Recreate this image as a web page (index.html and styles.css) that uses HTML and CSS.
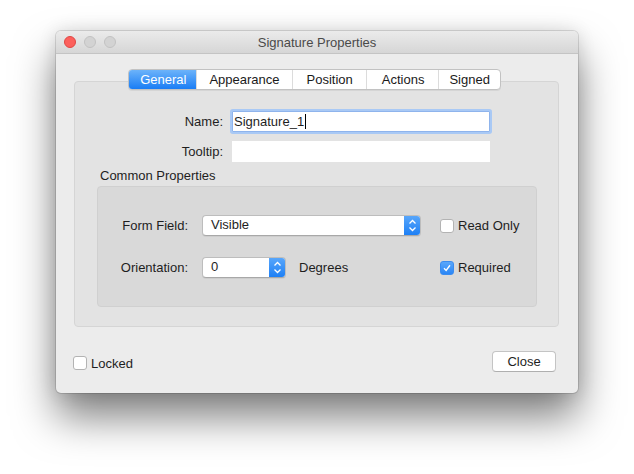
FILE: index.html
```html
<!DOCTYPE html>
<html lang="en">
<head>
    <meta charset="UTF-8">
    <title>Signature Properties</title>
    <link rel="stylesheet" href="styles.css">
</head>
<body>
    <div class="window">
        <div class="titlebar">
            <div class="lights">
                <span class="light close-light"></span>
                <span class="light"></span>
                <span class="light"></span>
            </div>
            <div class="title">Signature Properties</div>
        </div>

        <div class="content">
            <div class="tabbox">
                <div class="tabs">
                    <div class="tab active">General</div>
                    <div class="tab">Appearance</div>
                    <div class="tab tab-position">Position</div>
                    <div class="tab tab-actions">Actions</div>
                    <div class="tab tab-signed">Signed</div>
                </div>

                <div class="row name-row">
                    <div class="label">Name:</div>
                    <div class="field focused">Signature_1<span class="caret"></span></div>
                </div>
                <div class="row">
                    <div class="label">Tooltip:</div>
                    <div class="field"></div>
                </div>

                <div class="group-title">Common Properties</div>
                <div class="group">
                    <div class="prop-row">
                        <div class="prop-label">Form Field:</div>
                        <div class="prop-control">
                            <div class="popup wide">
                                <span class="popup-value">Visible</span>
                                <span class="stepper">
                                    <svg width="17" height="21" viewBox="0 0 17 21"><path d="M5.5 8.5 L8.5 5.5 L11.5 8.5 M5.5 12.5 L8.5 15.5 L11.5 12.5" fill="none" stroke="#fff" stroke-width="1.3"/></svg>
                                </span>
                            </div>
                        </div>
                        <label class="check"><span class="box"></span>Read Only</label>
                    </div>
                    <div class="prop-row">
                        <div class="prop-label">Orientation:</div>
                        <div class="prop-control">
                            <div class="popup narrow">
                                <span class="popup-value">0</span>
                                <span class="stepper">
                                    <svg width="17" height="21" viewBox="0 0 17 21"><path d="M5.5 8.5 L8.5 5.5 L11.5 8.5 M5.5 12.5 L8.5 15.5 L11.5 12.5" fill="none" stroke="#fff" stroke-width="1.3"/></svg>
                                </span>
                            </div>
                            <span class="unit">Degrees</span>
                        </div>
                        <label class="check"><span class="box checked"><svg width="14" height="14" viewBox="0 0 14 14"><path d="M3.5 7.3 L6 9.8 L10.5 3.8" fill="none" stroke="#fff" stroke-width="1.6"/></svg></span>Required</label>
                    </div>
                </div>
            </div>

            <div class="footer-row">
                <label class="check"><span class="box"></span>Locked</label>
                <div class="button">Close</div>
            </div>
        </div>
    </div>
</body>
</html>
```

FILE: styles.css
```css
* {
    margin: 0;
    padding: 0;
    box-sizing: border-box;
}

html, body {
    min-height: 100vh;
}

body {
    background: #fff;
    font-family: "Liberation Sans", Arial, sans-serif;
    font-size: 13px;
    color: #1e1e1e;
    padding: 31px 0 0 56px;
}

.window {
    width: 522px;
    height: 362px;
    background: #ececec;
    border-radius: 5px;
    box-shadow: 0 0 0 1px rgba(0,0,0,0.12), 0 24px 42px rgba(0,0,0,0.5), 0 0 18px rgba(0,0,0,0.12);
    overflow: hidden;
}

.titlebar {
    height: 23px;
    background: linear-gradient(#ebebeb, #d6d6d6);
    border-bottom: 1px solid #c4c4c4;
    display: flex;
    align-items: center;
}

.lights {
    display: flex;
    gap: 8px;
    padding-left: 8px;
}

.light {
    width: 12px;
    height: 12px;
    border-radius: 50%;
    background: #d3d3d3;
    border: 1px solid #c2c2c2;
}

.light.close-light {
    background: #fc605c;
    border-color: #df4744;
}

.title {
    flex: 1;
    text-align: center;
    color: #4a4a4a;
    margin-left: -60px;
}

.content {
    padding: 27px 19px 0 18px;
}

.tabbox {
    height: 246px;
    background: #e3e3e3;
    border: 1px solid #d5d5d5;
    border-radius: 4px;
    display: flex;
    flex-direction: column;
}

.tabs {
    align-self: center;
    margin-top: -13px;
    margin-left: -4px;
    display: flex;
    height: 21px;
    background: #fff;
    border: 1px solid #c2c2c2;
    border-radius: 4px;
    box-shadow: 0 1px 0 rgba(0,0,0,0.06);
    overflow: hidden;
}

.tab {
    padding: 0 12px;
    line-height: 19px;
    border-left: 1px solid #dcdcdc;
    color: #1a1a1a;
}

.tab:first-child {
    border-left: none;
}

.tab.active {
    background: linear-gradient(#6cb3fa, #1a7df5);
    color: #fff;
    padding: 0 10px 0 11px;
}

.tab-position {
    padding: 0 13px 0 14px;
}

.tab-actions {
    padding: 0 14px 0 15px;
}

.tab-signed {
    padding: 0 10px 0 10px;
}

.row {
    display: flex;
    align-items: center;
    margin-top: 9px;
}

.name-row {
    margin-top: 21px;
}

.label {
    width: 148px;
    text-align: right;
    margin-right: 9px;
}

.field {
    width: 258px;
    height: 21px;
    background: #fff;
    line-height: 21px;
    padding-left: 2px;
}

.field.focused {
    border: 1px solid #8fb4ec;
    box-shadow: 0 0 0 2px #a9c9f5;
    border-radius: 1px;
    line-height: 19px;
    padding-left: 1px;
}

.caret {
    display: inline-block;
    width: 1px;
    height: 15px;
    background: #000;
    vertical-align: -3px;
    margin-left: 1px;
}

.group-title {
    margin: 6px 0 0 25px;
    line-height: 16px;
}

.group {
    margin: 2px 21px 0 22px;
    height: 121px;
    background: #d9d9d9;
    border: 1px solid #d0d0d0;
    border-radius: 4px;
    padding: 28px 0 0 20px;
    display: flex;
    flex-direction: column;
    gap: 21px;
}

.prop-row {
    display: flex;
    align-items: center;
    height: 21px;
}

.prop-label {
    width: 70px;
    text-align: right;
    margin-right: 14px;
}

.prop-control {
    width: 219px;
    margin-right: 19px;
    display: flex;
    align-items: center;
}

.popup {
    height: 21px;
    background: #fff;
    border: 1px solid #bdbdbd;
    border-bottom-color: #a8a8a8;
    border-radius: 4px;
    display: flex;
    overflow: hidden;
    box-shadow: 0 1px 0 rgba(0,0,0,0.05);
}

.popup.wide {
    width: 219px;
}

.popup.narrow {
    width: 84px;
}

.popup-value {
    flex: 1;
    padding-left: 8px;
    line-height: 17px;
}

.stepper {
    width: 17px;
    margin: -1px -1px -1px 0;
    background: linear-gradient(#5ba8fb, #1b7ef5);
    display: flex;
    align-items: center;
    justify-content: center;
}

.unit {
    margin-left: 13px;
}

.check {
    display: flex;
    align-items: center;
    gap: 4px;
}

.box {
    width: 14px;
    height: 14px;
    background: #fff;
    border: 1px solid #b3b3b3;
    border-radius: 3px;
    display: flex;
    align-items: center;
    justify-content: center;
}

.box.checked {
    background: linear-gradient(#5aa7fb, #2a86f6);
    border-color: #3a8cf0;
}

.footer-row {
    display: flex;
    justify-content: space-between;
    align-items: center;
    margin: 24px 3px 0 -1px;
    height: 21px;
}

.footer-row .check {
    margin-top: 3px;
}

.button {
    width: 64px;
    height: 21px;
    background: #fff;
    border: 1px solid #c4c4c4;
    border-bottom-color: #afafaf;
    border-radius: 4px;
    text-align: center;
    line-height: 19px;
}
```
